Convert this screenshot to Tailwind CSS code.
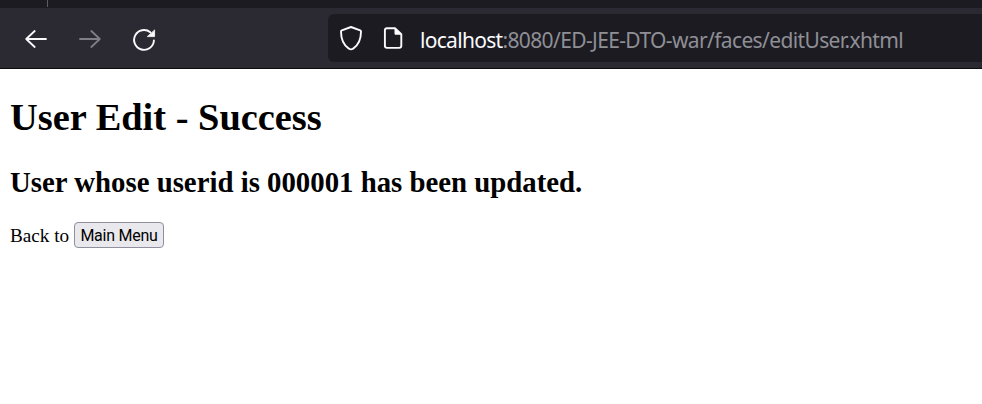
<!DOCTYPE html>
<html lang="en">
<head>
<meta charset="utf-8">
<title>User Edit - Success</title>
<script src="https://cdn.jsdelivr.net/npm/@tailwindcss/browser@4"></script>
</head>
<body class="h-[404px] w-[982px] overflow-hidden bg-white text-black">
<header>
  <div class="flex h-2 bg-[#1c1b22]"><div class="ml-[47px] h-[7px] w-px bg-[#5b5b63]"></div></div>
  <nav class="flex h-[61px] items-start border-b border-[#0c0c0d] bg-[#2b2a33] pt-1.5">
    <svg class="mt-[9px] ml-[20px] h-8 w-8 shrink-0" viewBox="0 0 32 32" fill="none" stroke="#fbfbfe" stroke-width="1.8" stroke-linecap="round" stroke-linejoin="round"><path d="M26 16H6.2M14.7 8L6.2 16L14.7 24"/></svg>
    <svg class="mt-[9px] ml-[22px] h-8 w-8 shrink-0" viewBox="0 0 32 32" fill="none" stroke="#7f7e85" stroke-width="1.8" stroke-linecap="round" stroke-linejoin="round"><path d="M6 16H25.8M17.3 8L25.8 16L17.3 24"/></svg>
    <svg class="mt-[9px] ml-[22px] h-8 w-8 shrink-0" viewBox="0 0 32 32" fill="none" stroke="#fbfbfe" stroke-width="1.9" stroke-linecap="round"><path d="M25.900 17.500A9.900 9.900 0 1 1 22.300 9.300"/><path d="M26.600 7.300V13.600H19.600Z" fill="#fbfbfe" stroke-width=".8" stroke-linejoin="round"/></svg>
    <div class="ml-[168px] flex h-12 flex-1 rounded-l-md bg-[#1c1b22]">
      <svg class="mt-2 ml-[7px] h-8 w-8 shrink-0" viewBox="0 0 32 32" fill="none" stroke="#fbfbfe" stroke-width="1.9" stroke-linejoin="round"><path d="M16 5L25.2 8.4Q26 8.7 26 9.6C26 17 24 22.8 18.2 26.6Q16 28.2 13.8 26.6C8 22.8 6 17 6 9.6Q6 8.7 6.8 8.4Z"/></svg>
      <svg class="mt-2 ml-[10px] h-8 w-8 shrink-0" viewBox="0 0 32 32" fill="none" stroke="#fbfbfe" stroke-width="1.9" stroke-linejoin="round"><path d="M18 6.2H10Q7.9 6.2 7.9 8.3V23.8Q7.900 25.900 10 25.900H22.200Q24.300 25.900 24.300 23.800V12.200Z"/><path d="M18 6.2V12.2H24.3Z" fill="#fbfbfe" stroke-width="1"/></svg>
      <div class="mt-[11px] ml-[11px] whitespace-nowrap font-['Noto_Sans','Open_Sans',sans-serif] text-[21px] leading-[30px] tracking-[-0.63px] text-[#8f8f96]"><span class="tracking-[-0.7px] text-[#fbfbfe]">localhost</span>:8080/ED-JEE-DTO-war/faces/editUser.xhtml</div>
    </div>
  </nav>
</header>
<main class="px-[10px] font-['Liberation_Serif','Times_New_Roman',serif]">
  <h1 class="pt-[26px] text-[38.4px] leading-[44px] font-bold whitespace-nowrap">User Edit - Success</h1>
  <h2 class="mt-[26px] text-[28.8px] leading-[34px] font-bold whitespace-nowrap">User whose userid is 000001 has been updated.</h2>
  <div class="mt-[23px] flex text-[19.2px] leading-[26px] whitespace-nowrap">
    <span class="mt-[1px] w-16">Back to</span>
    <button class="h-[26px] w-[90px] rounded border border-[#8f8f9d] bg-[#e9e9ed] pt-[2px] font-['Roboto','Liberation_Sans',sans-serif] text-[16px] leading-[22px] tracking-[-0.25px]">Main Menu</button>
  </div>
</main>
</body>
</html>
